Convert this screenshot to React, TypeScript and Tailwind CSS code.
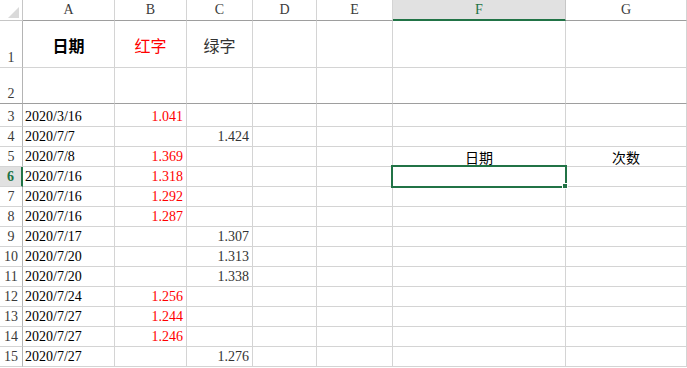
import React from 'react';

type Row = { n: number; h: string; a?: string; b?: string; c?: string; f?: string; g?: string };

const rows: Row[] = [
  { n: 3, h: 'h-[23px]', a: '2020/3/16', b: '1.041' },
  { n: 4, h: 'h-[20px]', a: '2020/7/7', c: '1.424' },
  { n: 5, h: 'h-[20px]', a: '2020/7/8', b: '1.369', f: '日期', g: '次数' },
  { n: 6, h: 'h-[20px]', a: '2020/7/16', b: '1.318' },
  { n: 7, h: 'h-[20px]', a: '2020/7/16', b: '1.292' },
  { n: 8, h: 'h-[20px]', a: '2020/7/16', b: '1.287' },
  { n: 9, h: 'h-[20px]', a: '2020/7/17', c: '1.307' },
  { n: 10, h: 'h-[20px]', a: '2020/7/20', c: '1.313' },
  { n: 11, h: 'h-[20px]', a: '2020/7/20', c: '1.338' },
  { n: 12, h: 'h-[20px]', a: '2020/7/24', b: '1.256' },
  { n: 13, h: 'h-[20px]', a: '2020/7/27', b: '1.244' },
  { n: 14, h: 'h-[20px]', a: '2020/7/27', b: '1.246' },
  { n: 15, h: 'h-[20px]', a: '2020/7/27', c: '1.276' },
];

const cols = ['A', 'B', 'C', 'D', 'E', 'F', 'G'];

const serif = { fontFamily: '"Liberation Serif", "Noto Sans CJK SC", serif' };
const cjk = { fontFamily: '"Noto Sans CJK SC", sans-serif' };

// plain grid cell, alignment is added per cell
const cell = 'border-r border-b border-[#d4d4d4] flex whitespace-nowrap';

export default function App() {
  return (
    <div className="relative w-[687px] h-[368px] overflow-hidden bg-white text-[14px] leading-[16px]" style={serif}>
      <div className="grid grid-cols-[23px_92px_72px_66px_64px_76px_173px_1fr]">
        {/* column headers */}
        <div className="h-[21px] border-r border-b border-r-[#c6c6c6] border-b-[#c6c6c6] relative">
          <div className="absolute left-[8px] top-[7px] w-0 h-0 border-l-[11px] border-l-transparent border-b-[11px] border-b-[#dadada]" />
        </div>
        {cols.map((c) =>
          c === 'F' ? (
            <div key={c} className="h-[21px] bg-[#e1e1e1] border-b-2 border-b-[#217346] border-r border-r-[#c6c6c6] flex items-center justify-center text-[#217346]">
              {c}
            </div>
          ) : (
            <div key={c} className="h-[21px] border-r border-r-[#d4d4d4] border-b border-b-[#9e9e9e] flex items-center justify-center text-[#3b3b3b]">
              {c}
            </div>
          )
        )}

        {/* row 1 */}
        <div className="h-[47px] border-r border-b border-r-[#b4b4b4] border-b-[#d4d4d4] flex items-end justify-center pb-[1px] text-[#3b3b3b]">1</div>
        <div className={cell + ' items-center justify-center pt-[2px] text-[16px] leading-[20px] font-bold text-black'} style={cjk}>日期</div>
        <div className={cell + ' items-center justify-center pt-[2px] text-[16px] leading-[20px] text-[#ff0000]'} style={cjk}>红字</div>
        <div className={cell + ' items-center justify-center pt-[2px] text-[16px] leading-[20px] text-[#333333]'} style={cjk}>绿字</div>
        <div className={cell} />
        <div className={cell} />
        <div className={cell} />
        <div className={cell} />

        {/* row 2, frozen below */}
        <div className="h-[36px] border-r border-b border-r-[#b4b4b4] border-b-[#9e9e9e] flex items-end justify-center pb-[1px] text-[#3b3b3b]">2</div>
        {cols.map((c) => (
          <div key={c} className="border-r border-r-[#d4d4d4] border-b border-b-[#9e9e9e]" />
        ))}

        {rows.map((r) => (
          <React.Fragment key={r.n}>
            {r.n === 6 ? (
              <div className={r.h + ' bg-[#e1e1e1] border-r-2 border-r-[#217346] border-b border-b-[#d4d4d4] flex items-end justify-center pb-[1px] font-bold text-[#217346]'}>
                {r.n}
              </div>
            ) : (
              <div className={r.h + ' border-r border-b border-r-[#b4b4b4] border-b-[#d4d4d4] flex items-end justify-center pb-[1px] text-[#3b3b3b]'}>
                {r.n}
              </div>
            )}
            <div className={cell + ' items-end pl-[2px] pb-[1px] text-black'}>{r.a}</div>
            <div className={cell + ' items-end justify-end pr-[3px] pb-[1px] text-[#ff0000]'}>{r.b}</div>
            <div className={cell + ' items-end justify-end pr-[3px] pb-[1px] text-[#333333]'}>{r.c}</div>
            <div className={cell} />
            <div className={cell} />
            <div className={cell + ' items-center justify-center text-black'} style={cjk}>{r.f}</div>
            <div className={cell + ' items-center justify-center text-black'} style={cjk}>{r.g}</div>
          </React.Fragment>
        ))}
      </div>

      {/* active cell F6 */}
      <div className="absolute left-[391px] top-[165px] w-[176px] h-[23px] border-2 border-[#217346] pointer-events-none" />
      <div className="absolute left-[562px] top-[183px] w-[6px] h-[6px] bg-[#217346] border border-white" />
    </div>
  );
}
